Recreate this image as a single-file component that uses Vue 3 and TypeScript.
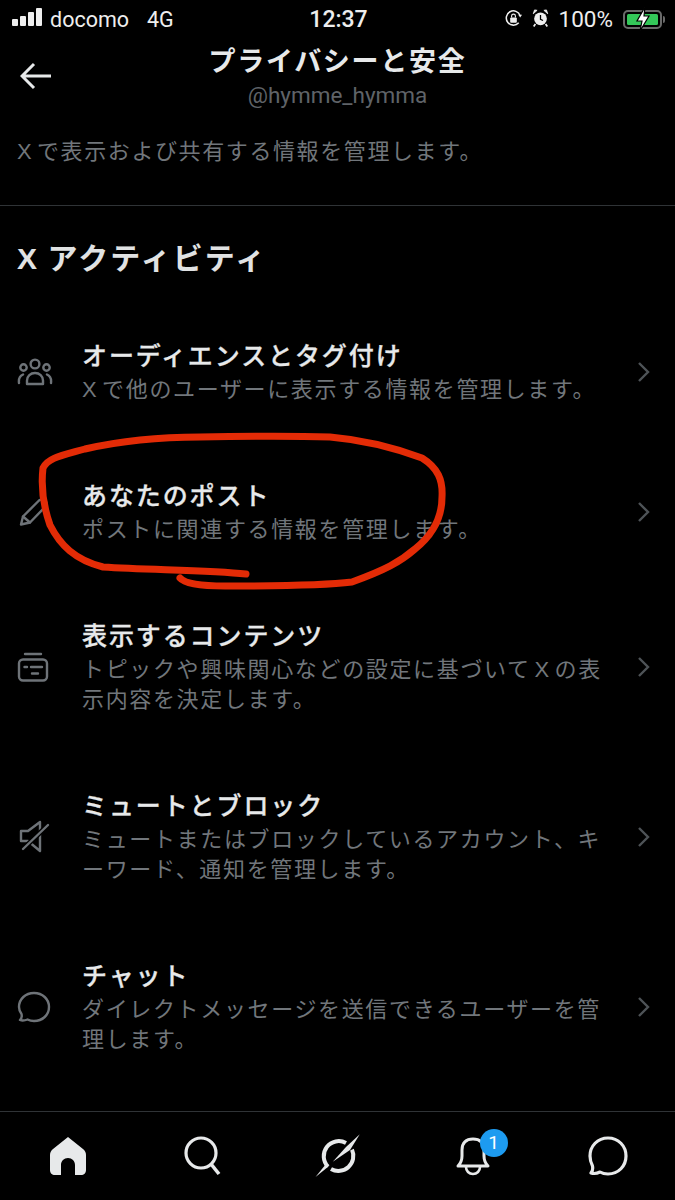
<template>
  <div class="screen">
    <div class="status-bar">
      <div class="status-left">
        <div class="signal">
          <span v-for="h in [7, 10, 14, 18]" :key="h" class="signal-bar" :style="{ height: h + 'px' }"></span>
        </div>
        <span class="carrier">docomo</span>
        <span class="network">4G</span>
      </div>
      <span class="clock">12:37</span>
      <div class="status-right">
        <svg class="lock-icon" viewBox="0 0 20 20">
          <path d="M15.5 14.500A7.500 7.500 0 1 1 17 7" fill="none" stroke="#eee" stroke-width="1.600" />
          <path d="M15 6l4 0-2 3z" fill="#eee" />
          <rect x="6.500" y="9" width="7" height="5.500" rx="1" fill="#eee" />
          <path d="M8 9V7.400a2 2 0 0 1 4 0V9" fill="none" stroke="#eee" stroke-width="1.200" />
        </svg>
        <svg class="alarm-icon" viewBox="0 0 20 22">
          <circle cx="10" cy="12" r="7.500" fill="#eee" />
          <path d="M10 7.500v5l3 1.500" fill="none" stroke="#000" stroke-width="1.500" />
          <path d="M1.500 6L6 2 3 1.500zM18.500 6L14 2l3-.5z" fill="#eee" stroke="#eee" />
          <path d="M4 18l-2 3M16 18l2 3" stroke="#eee" stroke-width="2" />
        </svg>
        <span class="battery-pct">100%</span>
        <div class="battery">
          <div class="battery-fill"></div>
          <svg class="bolt" viewBox="0 0 16 26">
            <path d="M10 1L2 15h5l-2 10 9-15H9z" fill="#fff" stroke="#000" stroke-width="1.200" />
          </svg>
        </div>
        <span class="battery-nub"></span>
      </div>
    </div>

    <header class="top-bar">
      <svg class="back" viewBox="0 0 32 28">
        <path d="M14 2L2 14l12 12M2 14h29" fill="none" stroke="#e7e9ea" stroke-width="3" />
      </svg>
      <h1 class="page-title">プライバシーと安全</h1>
      <div class="handle">@hymme_hymma</div>
    </header>

    <p class="intro">X で表示および共有する情報を管理します。</p>
    <div class="divider"></div>

    <h2 class="section-title">X アクティビティ</h2>

    <div class="rows">
      <div v-for="row in rows" :key="row.title" class="row">
        <div class="row-icon">
          <svg v-if="row.icon === 'people'" width="36" height="28" viewBox="0 0 36 28" class="glyph">
            <circle cx="18" cy="6" r="4.400" />
            <circle cx="6.500" cy="9.500" r="3.200" />
            <circle cx="29.500" cy="9.500" r="3.200" />
            <path d="M10 26v-3.500c0-4.500 3.500-7.500 8-7.500s8 3 8 7.500V26z" />
            <path d="M2 25c-.5-4 .5-7 4-8.500M34 25c.5-4-.5-7-4-8.500" />
          </svg>
          <svg v-else-if="row.icon === 'pen'" class="glyph nudge" width="30" height="28" viewBox="0 0 30 28">
            <path d="M2 26.500l2-8L20 2.500c2-1.500 4-1.500 6 0s2 4 .5 6L11 24.500z" />
            <path d="M4 18.500l7 6" />
          </svg>
          <svg v-else-if="row.icon === 'card'" width="32" height="30" viewBox="0 0 32 30" class="glyph">
            <path d="M8 2h16" />
            <rect x="2" y="7.500" width="28" height="21" rx="4" />
            <path d="M7.500 15h2.500M14 15h11M15 21.500h6" />
          </svg>
          <svg v-else-if="row.icon === 'mute'" class="glyph nudge" width="32" height="34" viewBox="0 0 32 34">
            <path d="M2 11v10h7l12 10V2L9 11z" />
            <path d="M3 30L30 4" stroke="#000" stroke-width="5" />
            <path d="M4 29L29 5" />
          </svg>
          <svg v-else width="34" height="32" viewBox="0 0 34 32" class="glyph">
            <path d="M3 29c2-2 2-4 1.500-6C3 21 2 18.500 2 16 2 8 8.500 2 17 2s15 6 15 14-6.500 14-15 14c-2.500 0-4.500-.5-6.500-1.500-2.500 1-5 1.500-7.500.5z" />
          </svg>
        </div>
        <div class="row-text">
          <div class="row-title">{{ row.title }}</div>
          <div class="row-desc">{{ row.desc }}</div>
        </div>
        <svg class="chevron" width="14" height="22" viewBox="0 0 14 22">
          <path d="M2 2l9 9-9 9" fill="none" stroke="#4e5357" stroke-width="2.400" />
        </svg>
      </div>
    </div>

    <nav class="tab-bar">
      <div class="tab">
        <svg width="36" height="38" viewBox="0 0 36 38">
          <path d="M18 0L33 12c2 1.500 3 3.500 3 6v15c0 3-2 5-5 5h-6V28c0-4-3-7-7-7s-7 3-7 7v10H5c-3 0-5-2-5-5V18c0-2.500 1-4.500 3-6z" fill="#e7e9ea" />
        </svg>
      </div>
      <div class="tab">
        <svg width="38" height="40" viewBox="0 0 38 40">
          <circle cx="17" cy="17" r="15" fill="none" stroke="#e7e9ea" stroke-width="3.200" />
          <path d="M27 28l8 10" stroke="#e7e9ea" stroke-width="3.600" fill="none" />
        </svg>
      </div>
      <div class="tab">
        <svg width="46" height="50" viewBox="0 0 46 50">
          <path d="M31 12A15 15 0 0 0 13 35.600" fill="none" stroke="#e7e9ea" stroke-width="4" />
          <path d="M16 38A15 15 0 0 0 37 18.700" fill="none" stroke="#e7e9ea" stroke-width="4" />
          <path d="M44.800 3.300L35 19 17.800 30.700 31 16z" fill="#e7e9ea" />
          <path d="M.5 46L11 33l2.500 2.500z" fill="#e7e9ea" />
        </svg>
      </div>
      <div class="tab">
        <div class="bell-wrap">
          <svg width="36" height="40" viewBox="0 0 36 40">
            <path d="M3 30c2-2 4-5 4-10v-6C7 7 11 3 18 3s11 4 11 11v6c0 5 2 8 4 10z" fill="none" stroke="#e7e9ea" stroke-width="3" stroke-linejoin="round" />
            <path d="M11 31c0 4 3 7 7 7s7-3 7-7" fill="none" stroke="#e7e9ea" stroke-width="2.600" />
          </svg>
          <span class="badge">1</span>
        </div>
      </div>
      <div class="tab">
        <svg width="40" height="40" viewBox="0 0 40 40">
          <path d="M3 37c2-2 2-4 1.500-7C3 27 2 24 2 20 2 10 9.500 2 20 2s18 8 18 18-7.500 18-18 18c-3 0-5.500-.5-8-2-3 1.500-6 2-9 1z" fill="none" stroke="#e7e9ea" stroke-width="3.200" stroke-linejoin="round" />
        </svg>
      </div>
    </nav>

    <svg class="scribble" width="675" height="1200" viewBox="0 0 675 1200">
      <path d="M246 574C210 570 150 570 103 567C75 560 60 545 50 525C43 505 41 485 43 468C48 458 60 456 85 449C120 441 160 437 200 437C250 436 300 436 330 437C365 440 395 448 422 458C438 468 443 480 442 497C442 520 430 537 415 549C400 562 385 570 352 582C320 586 270 586 225 586C205 586 185 584 180 578" fill="none" stroke="#e32b06" stroke-width="7" stroke-linecap="round" stroke-linejoin="round" />
    </svg>
  </div>
</template>

<script setup lang="ts">
interface SettingRow {
  icon: string;
  title: string;
  desc: string;
}

const rows: SettingRow[] = [
  {
    icon: 'people',
    title: 'オーディエンスとタグ付け',
    desc: 'X で他のユーザーに表示する情報を管理します。',
  },
  {
    icon: 'pen',
    title: 'あなたのポスト',
    desc: 'ポストに関連する情報を管理します。',
  },
  {
    icon: 'card',
    title: '表示するコンテンツ',
    desc: 'トピックや興味関心などの設定に基づいて X の表示内容を決定します。',
  },
  {
    icon: 'mute',
    title: 'ミュートとブロック',
    desc: 'ミュートまたはブロックしているアカウント、キーワード、通知を管理します。',
  },
  {
    icon: 'chat',
    title: 'チャット',
    desc: 'ダイレクトメッセージを送信できるユーザーを管理します。',
  },
];
</script>

<style>
html,
body {
  margin: 0;
  background: #000;
}
</style>

<style scoped>
.screen {
  position: relative;
  width: 675px;
  height: 1200px;
  overflow: hidden;
  background: #000;
  display: flex;
  flex-direction: column;
  font-family: "Liberation Sans", "Noto Sans CJK JP", sans-serif;
  color: #e7e9ea;
}

.status-bar {
  height: 38px;
  display: grid;
  grid-template-columns: 1fr auto 1fr;
  align-items: center;
  padding: 0 10px 0 12px;
  color: #eee;
  font-family: Roboto, "Liberation Sans", sans-serif;
}

.status-left {
  display: flex;
  align-items: center;
}

.signal {
  display: flex;
  align-items: flex-end;
  gap: 2px;
  width: 30px;
  height: 18px;
  margin-top: -4px;
}

.signal-bar {
  width: 6px;
  background: #eee;
  border-radius: 1px;
}

.carrier {
  margin-left: 8px;
  font-size: 21.500px;
}

.network {
  margin-left: 18px;
  font-size: 21.500px;
}

.clock {
  font-size: 23px;
  font-weight: 500;
}

.status-right {
  display: flex;
  align-items: center;
  justify-content: flex-end;
}

.lock-icon {
  width: 19px;
  height: 19px;
  margin-top: -2px;
}

.alarm-icon {
  width: 17px;
  height: 20px;
  margin-left: 9px;
  margin-top: -2px;
}

.battery-pct {
  margin-left: 10px;
  font-size: 22.500px;
}

.battery {
  position: relative;
  width: 39px;
  height: 19px;
  margin-left: 10px;
  padding: 2px;
  box-sizing: border-box;
  border: 2px solid #6a6a6a;
  border-radius: 5px;
}

.battery-nub {
  width: 2px;
  height: 7px;
  margin-left: 1px;
  background: #6a6a6a;
  border-radius: 0 2px 2px 0;
}

.battery-fill {
  height: 100%;
  background: #34c759;
  border-radius: 1.500px;
}

.bolt {
  position: absolute;
  left: 10px;
  top: -6px;
  width: 16px;
  height: 26px;
}

.top-bar {
  position: relative;
  height: 78px;
  text-align: center;
}

.back {
  position: absolute;
  left: 20px;
  top: 24px;
  width: 32px;
  height: 28px;
}

.page-title {
  margin: 6px 0 0;
  font-size: 27px;
  line-height: 36px;
  font-weight: 700;
  letter-spacing: 1.700px;
  color: #e7e9ea;
}

.handle {
  margin-top: 1px;
  font-size: 22.500px;
  line-height: 28px;
  color: #5f6368;
  font-family: Roboto, "Liberation Sans", sans-serif;
}

.intro {
  margin: 21px 0 0;
  padding-left: 17px;
  font-size: 22px;
  line-height: 30px;
  letter-spacing: 1.600px;
  word-spacing: -4px;
  color: #71767b;
}

.divider {
  height: 1px;
  margin-top: 38px;
  background: #2f3336;
}

.section-title {
  margin: 33px 0 0;
  padding-left: 17px;
  font-size: 30px;
  line-height: 40px;
  font-weight: 700;
  letter-spacing: 2.100px;
  word-spacing: -2px;
  color: #e0e2e3;
}

.rows {
  margin-top: 60px;
  display: flex;
  flex-direction: column;
  gap: 74px;
  padding-left: 17px;
  padding-right: 24px;
}

.row {
  display: flex;
  align-items: center;
}

.row-icon {
  width: 65px;
  flex: none;
  display: flex;
  align-items: center;
}

.glyph {
  fill: none;
  stroke: #6e7378;
  stroke-width: 2.400;
  stroke-linejoin: round;
  stroke-linecap: round;
}

.nudge {
  margin-left: 2px;
}

.row-text {
  flex: 1;
  min-width: 0;
}

.row-title {
  margin-bottom: 2px;
  font-size: 25px;
  line-height: 34px;
  font-weight: 500;
  letter-spacing: 1.900px;
  -webkit-text-stroke: 0.3px #e7e9ea;
  color: #e7e9ea;
}

.row-desc {
  width: 530px;
  font-size: 22px;
  line-height: 30px;
  letter-spacing: 1.650px;
  word-spacing: -4px;
  color: #71767b;
}

.chevron {
  flex: none;
}

.tab-bar {
  position: absolute;
  left: 0;
  right: 0;
  bottom: 0;
  height: 88px;
  border-top: 1px solid #2f3336;
  display: grid;
  grid-template-columns: repeat(5, 1fr);
  align-items: center;
  background: #000;
}

.tab {
  display: flex;
  justify-content: center;
  align-items: center;
}

.bell-wrap {
  position: relative;
  display: flex;
}

.badge {
  position: absolute;
  left: 25px;
  top: -7px;
  width: 28px;
  height: 28px;
  border-radius: 50%;
  background: #1d9bf0;
  color: #fff;
  font-size: 19px;
  line-height: 28px;
  text-align: center;
  font-family: Roboto, "Liberation Sans", sans-serif;
}

.scribble {
  position: absolute;
  left: 0;
  top: 0;
  pointer-events: none;
}
</style>
